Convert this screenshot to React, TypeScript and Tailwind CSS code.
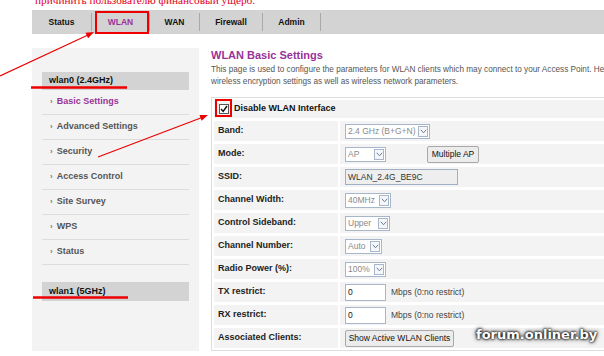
import React from "react";

const Sel = ({ w, text }: { w: string; text: string }) => (
  <div className={`${w} h-[15px] flex items-center justify-between border border-[#a7b6c8] bg-white pl-[2px] pr-[1px]`}>
    <span className="text-[8.5px] text-[#8a8a8a] leading-none whitespace-nowrap">{text}</span>
    <span className="w-[10px] h-[11px] border border-[#a7b6c8] bg-[#f4f6f9] flex items-center justify-center">
      <svg width="7" height="5" viewBox="0 0 7 5">
        <path d="M0.8 0.8 L3.5 3.8 L6.2 0.8" fill="none" stroke="#6b7b90" strokeWidth="1" />
      </svg>
    </span>
  </div>
);

const Btn = ({ w, text }: { w: string; text: string }) => (
  <div className={`${w} h-[17px] flex items-center justify-center border border-[#a9a9a9] rounded-[2px] bg-[#ececec] text-[8.5px] text-[#111] whitespace-nowrap`}>
    {text}
  </div>
);

const Row = ({ label, children }: { label: string; children?: React.ReactNode }) => (
  <div className="flex h-[20px] gap-[2px]">
    <div className="w-[124px] bg-[#f3f3f3] flex items-center pl-[4px] text-[9px] font-bold text-[#222] whitespace-nowrap">{label}</div>
    <div className="flex-1 bg-[#f3f3f3] flex items-center pl-[5px]">{children}</div>
  </div>
);

const items = ["Basic Settings", "Advanced Settings", "Security", "Access Control", "Site Survey", "WPS", "Status"];

export default function App() {
  return (
    <div className="relative w-[604px] h-[356px] overflow-hidden bg-white" style={{ fontFamily: '"Liberation Sans", Arial, sans-serif' }}>
      <div className="h-[10px] overflow-hidden pl-[35px]">
        <div className="mt-[-6px] text-[11.3px] leading-[12px] text-[#e3001b] whitespace-nowrap" style={{ fontFamily: '"Liberation Serif", "Times New Roman", serif' }}>
          причинить пользователю финансовый ущерб.
        </div>
      </div>

      <div className="ml-[32px] h-[24px] bg-[#d3d3d3] flex items-center text-[8.5px] font-bold text-[#111]">
        {[
          ["Status", "w-[59px]"],
          ["WLAN", "w-[57px]"],
          ["WAN", "w-[49px]"],
          ["Firewall", "w-[62px]"],
          ["Admin", "w-[57px]"],
        ].map(([t, w]) => (
          <React.Fragment key={t}>
            <div className={`${w} text-center ${t === "WLAN" ? "text-[#993399]" : ""}`}>{t}</div>
            <div className="w-[1px] h-[18px] bg-[#a9a9a9]" />
          </React.Fragment>
        ))}
      </div>

      <div className="flex mt-[14px]">
        <div className="ml-[32px] w-[167px] shrink-0 bg-[#f3f3f3] px-[10px] pt-[24px] pb-[19px]">
          <div className="h-[18px] bg-[#d3d3d3] flex items-center pl-[7px] text-[9px] font-bold text-[#111] whitespace-nowrap">wlan0 (2.4GHz)</div>
          {items.map((t, i) => (
            <div key={t} className="h-[25px] border-b border-[#dcdcdc] flex items-center pl-[8px] text-[9px] font-bold whitespace-nowrap">
              <span className="text-[8px] text-[#777] mr-[4px]">›</span>
              <span className={i === 0 ? "text-[#993399]" : "text-[#555]"}>{t}</span>
            </div>
          ))}
          <div className="mt-[17px] h-[19px] bg-[#d3d3d3] flex items-center pl-[7px] text-[9px] font-bold text-[#111] whitespace-nowrap">wlan1 (5GHz)</div>
        </div>

        <div className="ml-[12px] w-[520px] shrink-0">
          <div className="text-[11px] font-bold text-[#993399] leading-[14px]">WLAN Basic Settings</div>
          <div className="mt-[2px] text-[8.2px] leading-[12px] text-[#555] whitespace-nowrap">
            This page is used to configure the parameters for WLAN clients which may connect to your Access Point. Here you may change the
            <br />
            wireless encryption settings as well as wireless network parameters.
          </div>
          <div className="mt-[9px] border border-[#dddddd] p-[2px] flex flex-col gap-[3px]">
            <div className="h-[18px] bg-[#f3f3f3] flex items-center pl-[5px]">
              <div className="w-[10px] h-[10px] border border-[#555] bg-white flex items-center justify-center mr-[5px]">
                <svg width="8" height="8" viewBox="0 0 8 8">
                  <path d="M1 4 L3.2 6.4 L7 1" fill="none" stroke="#111" strokeWidth="1.5" />
                </svg>
              </div>
              <span className="text-[9px] font-bold text-[#111]">Disable WLAN Interface</span>
            </div>
            <Row label="Band:"><Sel w="w-[85px]" text="2.4 GHz (B+G+N)" /></Row>
            <Row label="Mode:">
              <Sel w="w-[41px]" text="AP" />
              <div className="ml-[41px]"><Btn w="w-[52px]" text="Multiple AP" /></div>
            </Row>
            <Row label="SSID:">
              <div className="w-[113px] h-[16px] border border-[#9fb0c4] bg-[#eeeeee] flex items-center pl-[2px] text-[8.5px] text-[#333]">WLAN_2.4G_BE9C</div>
            </Row>
            <Row label="Channel Width:"><Sel w="w-[46px]" text="40MHz" /></Row>
            <Row label="Control Sideband:"><Sel w="w-[45px]" text="Upper" /></Row>
            <Row label="Channel Number:"><Sel w="w-[37px]" text="Auto" /></Row>
            <Row label="Radio Power (%):"><Sel w="w-[41px]" text="100%" /></Row>
            <Row label="TX restrict:">
              <div className="w-[41px] h-[17px] border border-[#a7b6c8] bg-white flex items-center pl-[2px] text-[8.5px] text-[#111]">0</div>
              <span className="ml-[5px] text-[8.5px] text-[#444]">Mbps (0:no restrict)</span>
            </Row>
            <Row label="RX restrict:">
              <div className="w-[41px] h-[17px] border border-[#a7b6c8] bg-white flex items-center pl-[2px] text-[8.5px] text-[#111]">0</div>
              <span className="ml-[5px] text-[8.5px] text-[#444]">Mbps (0:no restrict)</span>
            </Row>
            <Row label="Associated Clients:"><Btn w="w-[109px]" text="Show Active WLAN Clients" /></Row>
          </div>
        </div>
      </div>

      <div
        className="absolute left-[476px] top-[325px] text-[13px] font-bold text-white whitespace-nowrap [text-shadow:0_0_3px_#000,0_0_5px_#333,0_0_2px_#000]"
        style={{ fontFamily: '"DejaVu Sans", Verdana, sans-serif' }}
      >
        forum.onliner.by
      </div>

      <svg className="absolute inset-0 pointer-events-none" width="604" height="356" viewBox="0 0 604 356">
        <rect x="96" y="12" width="52" height="21" fill="none" stroke="#ee0000" strokeWidth="2" />
        <rect x="216" y="100" width="15" height="16" fill="none" stroke="#ee0000" strokeWidth="2" />
        <line x1="31" y1="87.5" x2="127" y2="87.5" stroke="#ee0000" strokeWidth="2.5" />
        <line x1="33" y1="297.5" x2="128" y2="297.5" stroke="#ee0000" strokeWidth="2.5" />
        <line x1="0" y1="76" x2="88" y2="35" stroke="#ee0000" strokeWidth="1.2" />
        <polygon points="94,32 88.05,38.13 85.49,32.71" fill="#ee0000" />
        <line x1="98" y1="157" x2="202" y2="117.5" stroke="#ee0000" strokeWidth="1.2" />
        <polygon points="208,115 201.6,120.66 199.46,115.06" fill="#ee0000" />
      </svg>
    </div>
  );
}
